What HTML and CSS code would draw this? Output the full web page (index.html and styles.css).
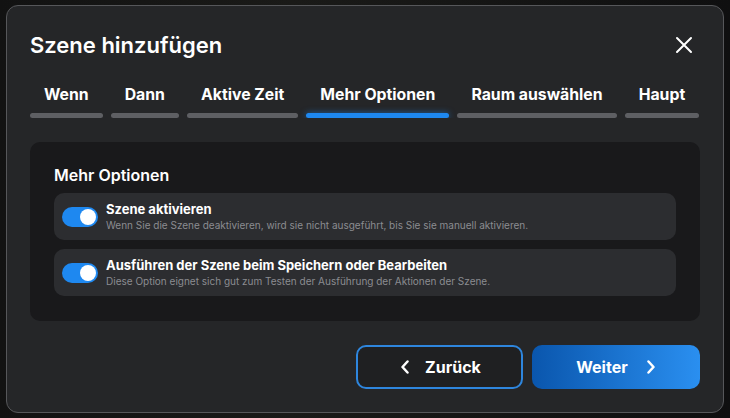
FILE: index.html
```html
<!DOCTYPE html>
<html lang="de">
<head>
<meta charset="utf-8">
<title>Szene hinzufügen</title>
<link rel="stylesheet" href="styles.css">
</head>
<body>
<div class="backdrop">
  <div class="modal">
    <div class="header">
      <h1 class="title">Szene hinzufügen</h1>
      <button class="close" aria-label="Schließen">
        <svg width="18" height="18" viewBox="0 0 18 18"><path d="M2 2 L16 16 M16 2 L2 16" stroke="#fff" stroke-width="2" stroke-linecap="round"/></svg>
      </button>
    </div>
    <div class="tabs">
      <div class="tab"><span class="tab-label">Wenn</span><span class="bar"></span></div>
      <div class="tab"><span class="tab-label">Dann</span><span class="bar"></span></div>
      <div class="tab"><span class="tab-label">Aktive Zeit</span><span class="bar"></span></div>
      <div class="tab active"><span class="tab-label">Mehr Optionen</span><span class="bar"></span></div>
      <div class="tab"><span class="tab-label">Raum auswählen</span><span class="bar"></span></div>
      <div class="tab"><span class="tab-label">Haupt</span><span class="bar"></span></div>
    </div>
    <div class="panel">
      <h2 class="panel-title">Mehr Optionen</h2>
      <div class="rows">
        <div class="row">
          <span class="toggle"><span class="knob"></span></span>
          <div class="row-text">
            <div class="row-title">Szene aktivieren</div>
            <div class="row-desc">Wenn Sie die Szene deaktivieren, wird sie nicht ausgeführt, bis Sie sie manuell aktivieren.</div>
          </div>
        </div>
        <div class="row">
          <span class="toggle"><span class="knob"></span></span>
          <div class="row-text">
            <div class="row-title">Ausführen der Szene beim Speichern oder Bearbeiten</div>
            <div class="row-desc">Diese Option eignet sich gut zum Testen der Ausführung der Aktionen der Szene.</div>
          </div>
        </div>
      </div>
    </div>
    <div class="footer">
      <button class="btn btn-back">
        <svg width="10" height="14" viewBox="0 0 10 14"><path d="M7.5 1.5 L2.5 7 L7.5 12.5" fill="none" stroke="#fff" stroke-width="2.5" stroke-linecap="round" stroke-linejoin="round"/></svg>
        <span>Zurück</span>
      </button>
      <button class="btn btn-next">
        <span>Weiter</span>
        <svg width="10" height="14" viewBox="0 0 10 14"><path d="M2.5 1.5 L7.5 7 L2.5 12.5" fill="none" stroke="#fff" stroke-width="2.5" stroke-linecap="round" stroke-linejoin="round"/></svg>
      </button>
    </div>
  </div>
</div>
</body>
</html>
```
FILE: styles.css
```css
* { box-sizing: border-box; }
html, body { margin: 0; padding: 0; }
body {
  width: 730px;
  height: 418px;
  background: #0e0e0f;
  font-family: Inter, "Noto Sans", "Liberation Sans", sans-serif;
  color: #fff;
  overflow: hidden;
}
.backdrop {
  width: 730px;
  height: 418px;
  padding: 5px 6px 5px 6px;
  background: linear-gradient(90deg, #121212 0%, #1a1a18 40%, #0f0f10 100%);
}
.modal {
  width: 718px;
  height: 408px;
  background: #252628;
  border: 1px solid #56575a;
  border-radius: 12px;
  padding: 24px 23px 23px 23px;
  display: flex;
  flex-direction: column;
}
.header {
  display: flex;
  align-items: center;
  justify-content: space-between;
  height: 30px;
}
.title {
  margin: 0;
  font-size: 22px;
  font-weight: 600;
  line-height: 30px;
}
.close {
  background: none;
  border: 0;
  padding: 0;
  width: 18px;
  height: 18px;
  margin-right: 7px;
  display: flex;
}
.tabs {
  margin-top: 25px;
  display: flex;
  gap: 8px;
  overflow: hidden;
}
.tab {
  display: flex;
  flex-direction: column;
  flex: none;
}
.tab-label {
  padding: 0 14px;
  font-size: 15.8px;
  font-weight: 700;
  line-height: 20px;
  white-space: nowrap;
}
.bar {
  margin-top: 8px;
  height: 6px;
  border-radius: 3px;
  background: #5e5f63;
}
.tab.active .bar {
  background: #1e88f0;
  box-shadow: 0 0 6px rgba(30, 136, 240, 0.6);
}
.panel {
  margin-top: 24px;
  background: #19191b;
  border-radius: 10px;
  padding: 23px 24px 25px 24px;
}
.panel-title {
  margin: 0;
  font-size: 16px;
  font-weight: 600;
  line-height: 20px;
}
.rows {
  margin-top: 8px;
  display: flex;
  flex-direction: column;
  gap: 9px;
}
.row {
  height: 47px;
  background: #2c2d30;
  border-radius: 10px;
  display: flex;
  align-items: center;
  padding-left: 8px;
  gap: 8px;
}
.toggle {
  width: 36px;
  height: 20px;
  border-radius: 10px;
  background: #1e88f0;
  display: flex;
  align-items: center;
  justify-content: flex-end;
  padding: 2px;
  flex: none;
}
.knob {
  width: 16px;
  height: 16px;
  border-radius: 50%;
  background: #fff;
}
.row-text { display: flex; flex-direction: column; }
.row-title {
  font-size: 13px;
  font-weight: 700;
  line-height: 16px;
}
.row-desc {
  font-size: 10px;
  line-height: 14px;
  color: #8b8c90;
  margin-top: 1px;
}
.footer {
  margin-top: 24px;
  display: flex;
  justify-content: flex-end;
  gap: 9px;
}
.btn {
  height: 44px;
  border-radius: 10px;
  font-family: inherit;
  font-size: 16px;
  font-weight: 700;
  color: #fff;
  display: flex;
  align-items: center;
  justify-content: center;
}
.btn-back {
  width: 167px;
  gap: 15px;
  padding-right: 4px;
  background: #1f2022;
  border: 2px solid #2e86de;
}
.btn-next {
  width: 168px;
  gap: 18px;
  border: 0;
  background: linear-gradient(90deg, #0a56ad 0%, #2a8ff0 100%);
}
```
